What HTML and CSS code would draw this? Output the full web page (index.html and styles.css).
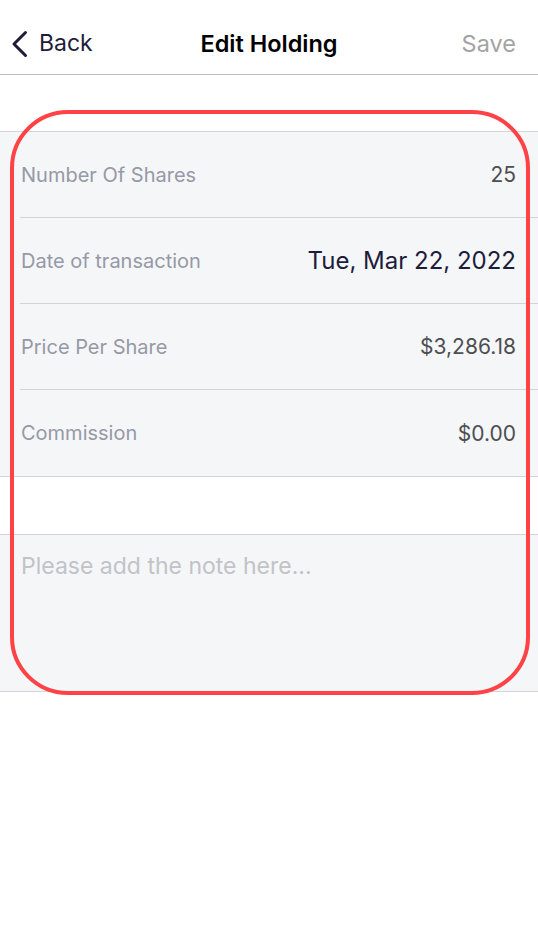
FILE: index.html
```html
<!DOCTYPE html>
<html lang="en">
<head>
    <meta charset="UTF-8">
    <title>Edit Holding</title>
    <link rel="stylesheet" href="styles.css">
</head>
<body>
    <div class="screen">
        <div class="navbar">
            <a class="nav-back" href="#">
                <svg class="chevron" width="18" height="28" viewBox="0 0 18 28">
                    <path d="M14.5 2.5 L3 14 L14.5 25.5" fill="none" stroke="#1d1d3b" stroke-width="3" stroke-linecap="round" stroke-linejoin="round"/>
                </svg>
                <span>Back</span>
            </a>
            <div class="nav-title">Edit Holding</div>
            <a class="nav-save" href="#">Save</a>
        </div>

        <div class="group">
            <div class="row">
                <span class="label">Number Of Shares</span>
                <span class="value">25</span>
            </div>
            <div class="row">
                <span class="label">Date of transaction</span>
                <span class="value date">Tue, Mar 22, 2022</span>
            </div>
            <div class="row">
                <span class="label">Price Per Share</span>
                <span class="value">$3,286.18</span>
            </div>
            <div class="row">
                <span class="label">Commission</span>
                <span class="value">$0.00</span>
            </div>
        </div>

        <div class="group note">
            <textarea class="note-input" placeholder="Please add the note here..."></textarea>
        </div>

        <div class="highlight"></div>
    </div>
</body>
</html>
```

FILE: styles.css
```css
body { margin: 0; background: #fff; font-family: Inter, "Noto Sans", sans-serif; }
.screen { position: relative; width: 538px; height: 935px; overflow: hidden; }

.navbar { height: 75px; box-sizing: border-box; padding: 12px 22px 0 11px; border-bottom: 1px solid #bdbdbd; display: flex; align-items: center; justify-content: space-between; position: relative; }
.nav-back { display: flex; align-items: center; gap: 10px; color: #1d1d3b; text-decoration: none; font-size: 23px; }
.chevron { display: block; margin-top: 1px; }
.nav-title { position: absolute; left: 0; right: 0; top: 12px; bottom: 0; display: flex; align-items: center; justify-content: center; font-size: 23.5px; font-weight: 600; color: #000; pointer-events: none; }
.nav-save { color: #a3a3a3; text-decoration: none; font-size: 23.5px; }

.group { margin-top: 56px; background: #f5f6f8; border-top: 1px solid #d4d4d8; border-bottom: 1px solid #d4d4d8; }
.row { height: 86px; box-sizing: border-box; margin-left: 20px; padding-right: 22px; display: flex; align-items: center; justify-content: space-between; border-bottom: 1px solid #d4d4d8; }
.row:last-child { border-bottom: none; }
.label { font-size: 20px; color: #9699a6; padding-left: 1px; }
.value { font-size: 21px; color: #4e4e52; }
.value.date { font-size: 24px; color: #1d1d3b; }

.note { margin-top: 57px; height: 156px; }
.note-input { display: block; width: 100%; height: 100%; box-sizing: border-box; border: none; background: transparent; resize: none; padding: 17px 21px; font-family: inherit; font-size: 23px; color: #333; outline: none; }
.note-input::placeholder { color: #c2c3c7; }

.highlight { position: absolute; left: 10px; top: 110px; width: 520px; height: 585px; box-sizing: border-box; border: 4px solid #fe4245; border-radius: 58px; pointer-events: none; }
```
